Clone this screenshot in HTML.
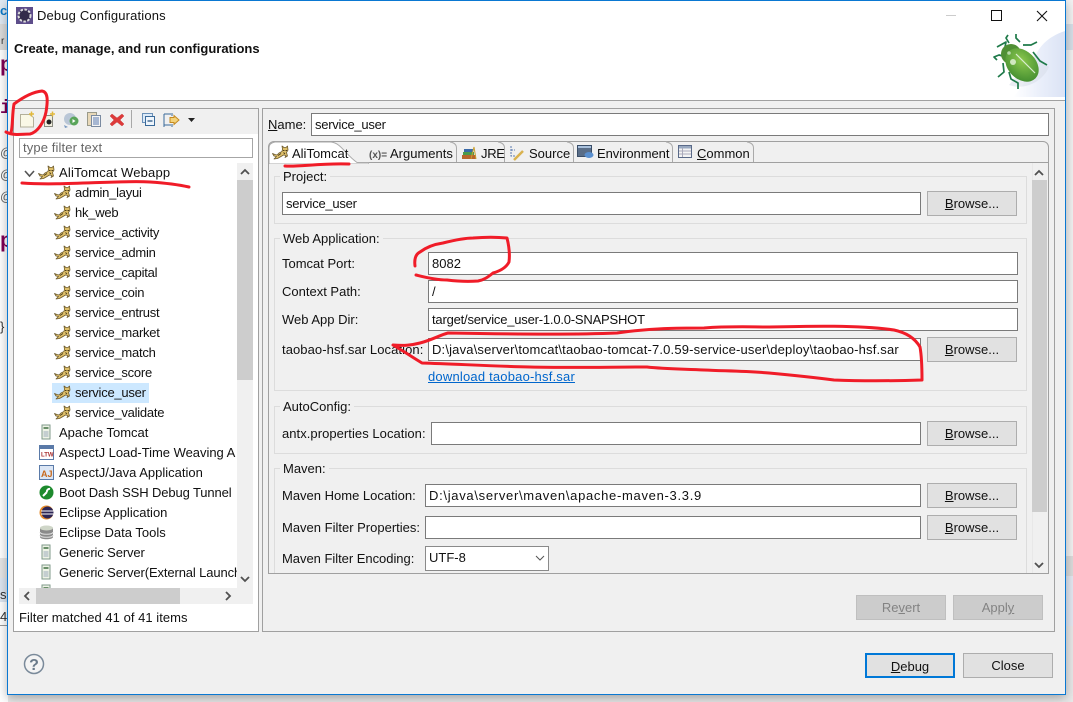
<!DOCTYPE html>
<html><head><meta charset="utf-8"><style>
*{box-sizing:border-box}
html,body{margin:0;padding:0;width:1073px;height:702px;overflow:hidden;background:#e9e9e9}
body{position:relative;font:13px/18px "Liberation Sans",sans-serif;color:#111}
.a{position:absolute}
.t{position:absolute;white-space:nowrap;line-height:18px;height:18px}
.i{position:absolute;background:#fff;border:1px solid #7a7a7a;height:23px;padding:2px 3px;line-height:18px;white-space:nowrap;overflow:hidden}
.b{position:absolute;width:90px;height:25px;background:#e1e1e1;border:1px solid #adadad;text-align:center;line-height:22px;padding-top:1px}
.b.d{background:#ccc;border-color:#bfbfbf;color:#838383}
.g{position:absolute;border:1px solid #dcdcdc;left:274px;width:753px}
.h{position:absolute;background:#f0f0f0;padding:0 3px;white-space:nowrap;height:18px;line-height:18px}
u{text-underline-offset:1px}
.s{letter-spacing:-.25px}
.tree .t{margin-top:1px}
</style></head><body>
<svg width="0" height="0" style="position:absolute"><defs>
<symbol id="cat" viewBox="0 0 17 16"><path d="M0.500 9.500L3 10.500L5 11L7 9L10 7.500L10.500 5L10 2L12 3.500H14L15.500 2L16 6L14.500 8.500L15.500 12L13 13.500L14 11.500L11.500 11L9 12.500L5.500 14.500L2 15L4.500 12.500L2 12Z" fill="#dfc06a" stroke="#6e5c30" stroke-width=".8" stroke-linejoin="round"/><path d="M11 6.500h1.500M13.500 6.500H15M6 11.500L9 9.500M11.500 8.500L13 10" stroke="#4a3c1c" stroke-width=".9" fill="none"/></symbol>
<symbol id="srv" viewBox="0 0 12 16"><rect x="2" y="1" width="8" height="14" fill="#eef3e6" stroke="#7f9a8a"/><rect x="3.500" y="3" width="5" height="2" fill="#6a8f6a"/><path d="M3.500 8h5M3.500 10h5M3.500 12h5" stroke="#9ab"/></symbol>
<linearGradient id="sw" x1="0" y1="0" x2="1" y2="0"><stop offset="0" stop-color="#fff"/><stop offset=".55" stop-color="#e9eefa"/><stop offset="1" stop-color="#dbe3f5"/></linearGradient>
<radialGradient id="el" cx=".4" cy=".4" r=".7"><stop offset="0" stop-color="#8cc84e"/><stop offset="1" stop-color="#3f8a2e"/></radialGradient>
</defs></svg>

<!-- background outside the dialog -->
<div class="a" style="left:0;top:0;width:8px;height:702px;background:#fff"></div>
<div class="a" style="left:0;top:0;width:8px;height:24px;background:#dfe9f3"></div>
<div class="a" style="left:0;top:24px;width:8px;height:26px;background:#dcdcdc"></div>
<div class="t" style="left:0;top:2px;color:#0a78c8;font-weight:bold">c</div>
<div class="t" style="left:1px;top:33px;font-size:10px;color:#333">r</div>
<div class="t" style="left:0;top:56px;font:bold 21px/22px 'Liberation Mono',monospace;color:#7f0055">p</div>
<div class="t" style="left:0;top:97px;font:bold 19px/22px 'Liberation Mono',monospace;color:#7f0055">i</div>
<div class="t" style="left:0;top:144px;color:#666">@</div>
<div class="t" style="left:0;top:166px;color:#666">@</div>
<div class="t" style="left:0;top:188px;color:#666">@</div>
<div class="t" style="left:0;top:232px;font:bold 21px/22px 'Liberation Mono',monospace;color:#7f0055">p</div>
<div class="t" style="left:0;top:318px;color:#333">}</div>
<div class="a" style="left:0;top:558px;width:8px;height:20px;background:#e6e6e6"></div>
<div class="a" style="left:0;top:578px;width:8px;height:24px;background:#dde6f1"></div>
<div class="t" style="left:0;top:586px;color:#333">s</div>
<div class="t" style="left:0;top:608px;color:#333">4e</div>
<div class="a" style="left:0;top:625px;width:8px;height:1px;background:#999"></div>
<div class="a" style="left:1065px;top:0;width:8px;height:702px;background:#f2f2f2"></div>
<div class="a" style="left:1065px;top:24px;width:8px;height:26px;background:#d7dfe8"></div>
<div class="a" style="left:1065px;top:556px;width:8px;height:20px;background:#dcdcdc"></div>
<div class="a" style="left:1065px;top:576px;width:8px;height:50px;background:#e3e8f2"></div>
<div class="a" style="left:1065px;top:626px;width:8px;height:76px;background:#e8e8e8"></div>

<!-- dialog -->
<div class="a" style="left:7px;top:0;width:1059px;height:695px;background:#f0f0f0;border:1px solid #0a78d2;box-shadow:0 3px 10px rgba(0,0,0,.3)"></div>
<div class="a" style="left:8px;top:1px;width:1057px;height:99px;background:#fff"></div>
<div class="a" style="left:8px;top:100px;width:1057px;height:1px;background:#a0a0a0"></div>
<svg class="a" style="left:16px;top:7px" width="17" height="17" viewBox="0 0 17 17"><rect width="17" height="17" fill="#5d4d8a"/><circle cx="8.500" cy="8.500" r="6" fill="#332c4a" stroke="#ddd" stroke-width="2" stroke-dasharray="2.500 1.500"/></svg>
<div class="t" style="left:37px;top:7px;font-size:13px;letter-spacing:.15px">Debug Configurations</div>
<div class="t" style="left:14px;top:40px;font-weight:bold;font-size:13px">Create, manage, and run configurations</div>
<div class="a" style="left:946px;top:15px;width:10px;height:1px;background:#ccc"></div>
<div class="a" style="left:991px;top:10px;width:11px;height:11px;border:1.500px solid #111"></div>
<svg class="a" style="left:1036px;top:10px" width="12" height="12"><path d="M1 1L11 11M11 1L1 11" stroke="#111" stroke-width="1.100"/></svg>

<!-- beetle -->
<svg class="a" style="left:985px;top:25px" width="80" height="72" viewBox="0 0 80 72">
<path d="M80 6C62 12 54 22 50 32C44 50 38 62 28 72H80Z" fill="url(#sw)"/>
<path d="M24 60C40 66 58 56 64 42L50 30Z" fill="#d5dce8" opacity=".5"/>
<g stroke="#1f7a4a" stroke-width="1.700" fill="none" stroke-linejoin="round"><path d="M20 22L21 17L12 22"/><path d="M24 18L21 13L23 10"/><path d="M35 17L31 13L31 9"/><path d="M38 20L46 20L52 17"/><path d="M18 31L14 30L9 32L12 35"/><path d="M18 38L19 47L13 52"/><path d="M24 47L26 54L33 58L33 64"/><path d="M48 27L55 36L62 40"/></g>
<ellipse cx="26" cy="29" rx="10" ry="10" fill="#4f8f34"/>
<ellipse cx="37" cy="40" rx="19" ry="14" transform="rotate(45 37 40)" fill="url(#el)"/>
<path d="M31 29L50 48" stroke="#d9edd0" stroke-width="1.200"/>
<circle cx="28" cy="37" r="3" fill="#d0e8c0"/><circle cx="24" cy="28" r="1.800" fill="#b7d8a8"/>
</svg>

<!-- left panel -->
<div class="a" style="left:13px;top:108px;width:246px;height:524px;background:#fff;border:1px solid #a0a0a0"></div>
<div class="a" style="left:14px;top:109px;width:244px;height:25px;background:#f0f0f0"></div>
<svg class="a" style="left:14px;top:109px" width="190" height="25" viewBox="14 109 190 25">
<path d="M20.500 114.500h9l4 3v9.500h-13z" fill="#faf8e6" stroke="#b3b09a"/><path d="M29 114h5M31.500 111.500v5" stroke="#e2b93c" stroke-width="1.500"/>
<path d="M44.500 115.500h8v11h-8z" fill="#f2f0e0" stroke="#8a8a80"/><circle cx="49" cy="122" r="2.500" fill="#222"/><path d="M50 114h5M52.500 111.500v5" stroke="#e2b93c" stroke-width="1.500"/>
<circle cx="70" cy="119" r="6" fill="#b9c6d6"/><circle cx="74" cy="121" r="4.500" fill="#5aa55a"/><path d="M72.500 119l3 2-3 2z" fill="#fff"/><path d="M64 125l4 2-3 1z" fill="#7a98c0"/>
<rect x="87.500" y="112.500" width="9" height="13" fill="#e8d8b8" stroke="#9a9a8a"/><rect x="91.500" y="115.500" width="9" height="11" fill="#f4f4f4" stroke="#7a8aa0"/><path d="M93 118h6M93 120h6M93 122h6M93 124h6" stroke="#5a7ab0"/>
<path d="M112 114l5 4 5-4 2 2-4 4 4 4-2 2-5-4-5 4-2-2 4-4-4-4z" fill="#dd3a3a" stroke="#c44" stroke-width=".5"/>
<rect x="131" y="110" width="1" height="18" fill="#a8a8a8"/>
<rect x="142.500" y="113.500" width="10" height="9" fill="#dceaf8" stroke="#6a90b8"/><rect x="145.500" y="116.500" width="9" height="9" fill="#eef5fc" stroke="#3a6a9a"/><path d="M147.500 121h5" stroke="#1a4a7a" stroke-width="1.200"/>
<path d="M164 114h7M172 113v3M164 125h7M172 124v3M164 114v13" stroke="#3a6a9a" fill="none"/><path d="M170 117.500h4v-2l5 4.500-5 4.500v-2h-4z" fill="#f3d27a" stroke="#c58a20"/>
<path d="M188 118h7l-3.500 4z" fill="#222"/>
</svg>
<div class="a" style="left:19px;top:138px;width:234px;height:20px;background:#fff;border:1px solid #a6a6a6;padding-left:3px;line-height:18px;color:#666;font-size:13px;letter-spacing:.12px">type filter text</div>

<div class="a tree" style="left:19px;top:164px;width:218px;height:424px;overflow:hidden;background:#fff">
<div class="a" style="left:33px;top:219px;width:97px;height:20px;background:#cde8ff"></div>
<svg class="a" style="left:5px;top:6px" width="11" height="8"><path d="M1 1L5.500 6L10 1" stroke="#555" stroke-width="1.600" fill="none"/></svg>
<svg class="a" style="left:19px;top:0" width="17" height="16"><use href="#cat"/></svg><div class="t" style="left:40px;top:-1px;letter-spacing:.2px">AliTomcat Webapp</div>
<svg class="a" style="left:35px;top:20px" width="17" height="16"><use href="#cat"/></svg><div class="t s" style="left:56px;top:19px">admin_layui</div>
<svg class="a" style="left:35px;top:40px" width="17" height="16"><use href="#cat"/></svg><div class="t s" style="left:56px;top:39px">hk_web</div>
<svg class="a" style="left:35px;top:60px" width="17" height="16"><use href="#cat"/></svg><div class="t s" style="left:56px;top:59px">service_activity</div>
<svg class="a" style="left:35px;top:80px" width="17" height="16"><use href="#cat"/></svg><div class="t s" style="left:56px;top:79px">service_admin</div>
<svg class="a" style="left:35px;top:100px" width="17" height="16"><use href="#cat"/></svg><div class="t s" style="left:56px;top:99px">service_capital</div>
<svg class="a" style="left:35px;top:120px" width="17" height="16"><use href="#cat"/></svg><div class="t s" style="left:56px;top:119px">service_coin</div>
<svg class="a" style="left:35px;top:140px" width="17" height="16"><use href="#cat"/></svg><div class="t s" style="left:56px;top:139px">service_entrust</div>
<svg class="a" style="left:35px;top:160px" width="17" height="16"><use href="#cat"/></svg><div class="t s" style="left:56px;top:159px">service_market</div>
<svg class="a" style="left:35px;top:180px" width="17" height="16"><use href="#cat"/></svg><div class="t s" style="left:56px;top:179px">service_match</div>
<svg class="a" style="left:35px;top:200px" width="17" height="16"><use href="#cat"/></svg><div class="t s" style="left:56px;top:199px">service_score</div>
<svg class="a" style="left:35px;top:220px" width="17" height="16"><use href="#cat"/></svg><div class="t s" style="left:56px;top:219px">service_user</div>
<svg class="a" style="left:35px;top:240px" width="17" height="16"><use href="#cat"/></svg><div class="t s" style="left:56px;top:239px">service_validate</div>
<svg class="a" style="left:21px;top:260px" width="12" height="16"><use href="#srv"/></svg><div class="t" style="left:40px;top:259px">Apache Tomcat</div>
<svg class="a" style="left:20px;top:281px" width="15" height="15"><rect x=".5" y=".5" width="14" height="14" fill="#fff" stroke="#5a7aa8"/><rect x="1" y="1" width="13" height="3" fill="#5a7aa8"/><text x="2" y="11.500" font-size="6" font-weight="bold" fill="#a33" font-family="Liberation Sans">LTW</text></svg><div class="t" style="left:40px;top:279px;letter-spacing:-.03px">AspectJ Load-Time Weaving A</div>
<svg class="a" style="left:20px;top:301px" width="15" height="15"><rect x=".5" y=".5" width="14" height="14" fill="#dbe6f5" stroke="#5a7aa8"/><text x="2" y="12" font-size="9" font-weight="bold" fill="#c8691c" font-family="Liberation Sans">AJ</text></svg><div class="t" style="left:40px;top:299px">AspectJ/Java Application</div>
<svg class="a" style="left:20px;top:321px" width="15" height="15"><circle cx="7.500" cy="7.500" r="7" fill="#1d8a2d"/><path d="M4 11L8 7M8 7a2.500 2.500 0 0 1 3-3" stroke="#fff" stroke-width="2" fill="none"/></svg><div class="t" style="left:40px;top:319px;letter-spacing:-.12px">Boot Dash SSH Debug Tunnel</div>
<svg class="a" style="left:20px;top:341px" width="15" height="15"><circle cx="7.500" cy="7.500" r="7" fill="#e58a2a"/><circle cx="8.500" cy="7.500" r="6" fill="#2c2555"/><path d="M2 6h13M2 9h13" stroke="#fff"/></svg><div class="t" style="left:40px;top:339px">Eclipse Application</div>
<svg class="a" style="left:20px;top:361px" width="15" height="15"><path d="M1 3v9c0 3 13 3 13 0V3z" fill="#8a8a8a"/><ellipse cx="7.500" cy="3" rx="6.500" ry="2.500" fill="#cfd6c8"/><path d="M1 7c0 3 13 3 13 0M1 10c0 3 13 3 13 0" stroke="#ddd" fill="none"/></svg><div class="t" style="left:40px;top:359px">Eclipse Data Tools</div>
<svg class="a" style="left:21px;top:380px" width="12" height="16"><use href="#srv"/></svg><div class="t" style="left:40px;top:379px;letter-spacing:-.12px">Generic Server</div>
<svg class="a" style="left:21px;top:400px" width="12" height="16"><use href="#srv"/></svg><div class="t" style="left:40px;top:399px;letter-spacing:-.12px">Generic Server(External Launch</div>
<svg class="a" style="left:21px;top:420px" width="12" height="16"><use href="#srv"/></svg>
</div>
<!-- tree scrollbars -->
<div class="a" style="left:237px;top:163px;width:16px;height:425px;background:#f0f0f0"></div>
<div class="a" style="left:237px;top:180px;width:16px;height:200px;background:#cdcdcd"></div>
<svg class="a" style="left:240px;top:168px" width="10" height="8"><path d="M1 6L5 2L9 6" stroke="#505050" stroke-width="1.800" fill="none"/></svg>
<svg class="a" style="left:240px;top:575px" width="10" height="8"><path d="M1 2L5 6L9 2" stroke="#505050" stroke-width="1.800" fill="none"/></svg>
<div class="a" style="left:19px;top:588px;width:234px;height:16px;background:#f0f0f0"></div>
<div class="a" style="left:36px;top:588px;width:144px;height:16px;background:#cdcdcd"></div>
<svg class="a" style="left:23px;top:591px" width="8" height="10"><path d="M6 1L2 5L6 9" stroke="#505050" stroke-width="1.800" fill="none"/></svg>
<svg class="a" style="left:224px;top:591px" width="8" height="10"><path d="M2 1L6 5L2 9" stroke="#505050" stroke-width="1.800" fill="none"/></svg>
<div class="t" style="left:19px;top:609px;letter-spacing:.03px">Filter matched 41 of 41 items</div>

<!-- right panel -->
<div class="a" style="left:262px;top:108px;width:793px;height:524px;border:1px solid #a0a0a0"></div>
<div class="t" style="left:268px;top:116px"><u>N</u>ame:</div>
<div class="i s" style="left:311px;top:113px;width:738px">service_user</div>

<!-- tab folder -->
<div class="a" style="left:268px;top:141px;width:781px;height:433px;border:1px solid #a0a0a0;border-radius:6px 6px 0 0"></div>
<div class="a" style="left:269px;top:162px;width:779px;height:1px;background:#a0a0a0"></div>
<svg class="a" style="left:269px;top:141px" width="100" height="23"><path d="M0 22V7Q0 2 6 1H62C72 2 76 13 88 21.500H100V23H0Z" fill="#fff" stroke="#aaa"/></svg>
<svg class="a" style="left:272px;top:144px" width="17" height="16"><use href="#cat"/></svg><div class="t" style="left:292px;top:145px">AliTomcat</div>
<svg class="a" style="left:369px;top:148px" width="18" height="12"><text x="0" y="10" font-size="10" font-weight="bold" fill="#555" font-family="Liberation Sans">(x)=</text></svg><div class="t" style="left:390px;top:145px">Arguments</div>
<svg class="a" style="left:440px;top:141px" width="320" height="22" fill="none" stroke="#aaa"><path d="M16.500 21V7Q16.500 2 10 1"/><path d="M64.500 21V7Q64.500 2 58 1"/><path d="M133.500 21V7Q133.500 2 127 1"/><path d="M232.500 21V7Q232.500 2 226 1"/><path d="M313.500 21V7Q313.500 2 307 1"/></svg>
<svg class="a" style="left:462px;top:146px" width="16" height="14"><rect x="0" y="9" width="14" height="4" fill="#b8652c"/><rect x="1" y="6" width="11" height="3" fill="#4c9a4c"/><rect x="2" y="3" width="9" height="3" fill="#3a6aa8"/><path d="M9 13L12 1l2 12" stroke="#c8a030" fill="none"/></svg><div class="t" style="left:481px;top:145px;letter-spacing:-.3px">JRE</div>
<svg class="a" style="left:509px;top:145px" width="16" height="16"><path d="M2 1v10h4M2 5h4" stroke="#5a7ab0" fill="none" stroke-dasharray="2 1"/><path d="M5 15L14 6" stroke="#d9b24f" stroke-width="2.500"/></svg><div class="t" style="left:529px;top:145px">Source</div>
<svg class="a" style="left:577px;top:145px" width="17" height="15"><rect x=".5" y=".5" width="14" height="11" fill="#5a6e88" stroke="#3a4e68"/><rect x="1" y="1" width="13" height="2" fill="#a8c0dc"/><ellipse cx="12" cy="10" rx="4.500" ry="3" fill="#5a90d0"/></svg><div class="t" style="left:597px;top:145px;letter-spacing:-.05px">Environment</div>
<svg class="a" style="left:678px;top:145px" width="15" height="14"><rect x=".5" y=".5" width="13" height="12" fill="#f4f4f4" stroke="#5a6a88"/><rect x="1" y="1" width="12" height="2.500" fill="#98a8c0"/><path d="M4.500 3v9M1 6h12M1 9h12" stroke="#aab"/></svg><div class="t" style="left:697px;top:145px"><u>C</u>ommon</div>

<!-- scrollbar in form -->
<div class="a" style="left:1032px;top:163px;width:16px;height:410px;background:#f0f0f0;border-left:1px solid #e8e8e8"></div>
<div class="a" style="left:1032px;top:180px;width:15px;height:332px;background:#cdcdcd"></div>
<svg class="a" style="left:1034px;top:169px" width="10" height="8"><path d="M1 6L5 2L9 6" stroke="#505050" stroke-width="1.800" fill="none"/></svg>
<svg class="a" style="left:1034px;top:561px" width="10" height="8"><path d="M1 2L5 6L9 2" stroke="#505050" stroke-width="1.800" fill="none"/></svg>

<!-- groups -->
<div class="g" style="top:176px;height:48px"></div><div class="h" style="left:280px;top:168px">Project:</div>
<div class="i s" style="left:282px;top:192px;width:639px">service_user</div>
<div class="b" style="left:927px;top:191px"><u>B</u>rowse...</div>

<div class="g" style="top:238px;height:153px"></div><div class="h" style="left:280px;top:230px">Web Application:</div>
<div class="t" style="left:282px;top:255px">Tomcat Port:</div><div class="i" style="left:428px;top:252px;width:590px">8082</div>
<div class="t" style="left:282px;top:283px">Context Path:</div><div class="i" style="left:428px;top:280px;width:590px">/</div>
<div class="t" style="left:282px;top:311px">Web App Dir:</div><div class="i" style="left:428px;top:308px;width:590px;letter-spacing:-.2px">target/service_user-1.0.0-SNAPSHOT</div>
<div class="t" style="left:282px;top:341px;letter-spacing:.08px">taobao-hsf.sar Location:</div><div class="i" style="left:428px;top:338px;width:493px;letter-spacing:.17px">D:\java\server\tomcat\taobao-tomcat-7.0.59-service-user\deploy\taobao-hsf.sar</div>
<div class="b" style="left:927px;top:337px"><u>B</u>rowse...</div>
<div class="t" style="left:428px;top:368px;color:#0066cc;text-decoration:underline;letter-spacing:.2px">download taobao-hsf.sar</div>

<div class="g" style="top:406px;height:48px"></div><div class="h" style="left:280px;top:398px">AutoConfig:</div>
<div class="t" style="left:282px;top:425px;letter-spacing:.05px">antx.properties Location:</div><div class="i" style="left:431px;top:422px;width:490px"></div>
<div class="b" style="left:927px;top:421px"><u>B</u>rowse...</div>

<div class="a" style="left:274px;top:468px;width:753px;height:105px;border:1px solid #dcdcdc;border-bottom:0"></div><div class="h" style="left:280px;top:460px">Maven:</div>
<div class="t" style="left:282px;top:487px">Maven Home Location:</div><div class="i" style="left:425px;top:484px;width:496px;letter-spacing:.7px">D:\java\server\maven\apache-maven-3.3.9</div>
<div class="b" style="left:927px;top:483px"><u>B</u>rowse...</div>
<div class="t" style="left:282px;top:519px">Maven Filter Properties:</div><div class="i" style="left:425px;top:516px;width:496px"></div>
<div class="b" style="left:927px;top:515px"><u>B</u>rowse...</div>
<div class="t" style="left:282px;top:550px;letter-spacing:-.03px">Maven Filter Encoding:</div><div class="i" style="left:425px;top:546px;width:124px;height:25px;border-color:#8a8a8a">UTF-8</div>
<svg class="a" style="left:535px;top:555px" width="10" height="7"><path d="M1 1L5 5L9 1" stroke="#555" fill="none"/></svg>

<div class="b d" style="left:856px;top:595px">Re<u>v</u>ert</div>
<div class="b d" style="left:953px;top:595px">Appl<u>y</u></div>

<svg class="a" style="left:23px;top:653px" width="22" height="22"><circle cx="11" cy="11" r="9.500" fill="#f4f4f4" stroke="#7a8a9a" stroke-width="1.500"/><text x="11" y="17" text-anchor="middle" font-size="16" font-weight="bold" fill="#6a7a8a" font-family="Liberation Sans">?</text></svg>
<div class="b" style="left:865px;top:653px;border:2px solid #0078d7;line-height:21px"><u>D</u>ebug</div>
<div class="b" style="left:963px;top:653px">Close</div>

<!-- red annotations -->
<svg class="a" style="left:0;top:0;pointer-events:none" width="1073" height="702" fill="none" stroke="#f01c28" stroke-width="3" stroke-linecap="round" stroke-linejoin="round">
<path d="M6 132C14 136 22 134 30 134C38 132 44 122 46 112C48 100 48 92 42 91C32 92 22 98 14 104C12 115 13 125 11 133"/>
<path d="M22 183C60 186 120 180 150 182C165 183 180 185 189 187"/>
<path d="M285 166C300 167 320 163 349 164"/>
<path d="M415 266C414 258 416 254 420 252C428 246 436 244 443 243C455 240 465 238 473 238C485 237 497 237 507 238C509 246 510 254 509 262C506 268 500 271 493 273C488 277 484 280 478 281C465 282 455 281 447 280C435 280 424 277 416 275"/>
<path d="M393 345C405 346 412 345 420 343C432 340 440 335 448 333C500 334 570 335 617 333C650 328 680 328 704 328C730 326 750 327 769 327C810 326 860 325 894 330C908 333 916 340 920 347C922 358 922 370 922 380C890 381 860 381 834 380C810 377 790 375 769 373C745 371 725 371 704 370C685 369 665 369 647 367C610 367 570 368 530 367C490 366 455 364 422 363C412 357 405 352 393 345Z"/>
</svg>
</body></html>
